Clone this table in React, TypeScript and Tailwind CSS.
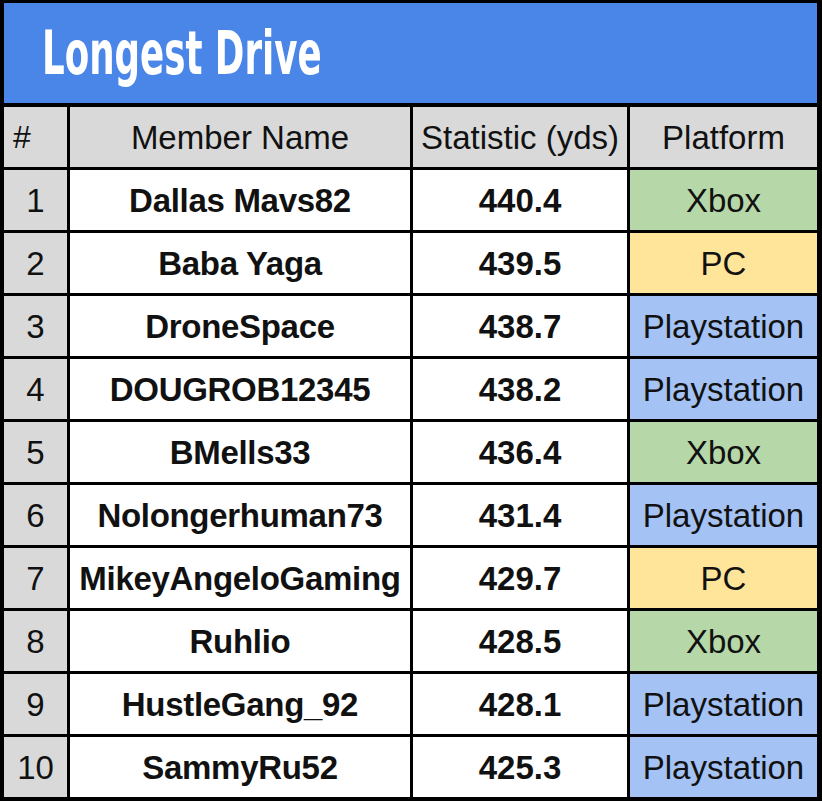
import React from 'react';

type Row = { rank: number; name: string; stat: string; platform: 'Xbox' | 'PC' | 'Playstation' };

const rows: Row[] = [
  { rank: 1, name: 'Dallas Mavs82', stat: '440.4', platform: 'Xbox' },
  { rank: 2, name: 'Baba Yaga', stat: '439.5', platform: 'PC' },
  { rank: 3, name: 'DroneSpace', stat: '438.7', platform: 'Playstation' },
  { rank: 4, name: 'DOUGROB12345', stat: '438.2', platform: 'Playstation' },
  { rank: 5, name: 'BMells33', stat: '436.4', platform: 'Xbox' },
  { rank: 6, name: 'Nolongerhuman73', stat: '431.4', platform: 'Playstation' },
  { rank: 7, name: 'MikeyAngeloGaming', stat: '429.7', platform: 'PC' },
  { rank: 8, name: 'Ruhlio', stat: '428.5', platform: 'Xbox' },
  { rank: 9, name: 'HustleGang_92', stat: '428.1', platform: 'Playstation' },
  { rank: 10, name: 'SammyRu52', stat: '425.3', platform: 'Playstation' },
];

const platformBg: Record<Row['platform'], string> = {
  Xbox: 'bg-[#b6d7a8]',
  PC: 'bg-[#ffe599]',
  Playstation: 'bg-[#a4c2f4]',
};

const cell = 'h-[60px] flex items-center justify-center text-[33px] leading-none text-[#111]';

export default function App() {
  return (
    <div className="w-[822px] h-[803px] bg-white font-['Liberation_Sans',Arial,sans-serif]">
      <div className="bg-black pt-[3px] pl-[4px] pr-[5px] pb-[4px]">
        {/* Title bar */}
        <div className="h-[100px] bg-[#4a86e8] flex items-center pl-[38px] overflow-hidden">
          <span className="origin-left scale-x-[0.66] text-white text-[60px] leading-none font-bold font-['DejaVu_Sans_Condensed','DejaVu_Sans',sans-serif] whitespace-nowrap">
            Longest Drive
          </span>
        </div>

        {/* Table */}
        <div className="mt-[4px] grid grid-cols-[63px_340px_214px_187px] gap-[3px]">
          <div className="h-[60px] flex items-center pl-[9px] bg-[#d9d9d9] text-[32px] leading-none text-[#111]">#</div>
          <div className={`${cell} bg-[#d9d9d9] text-[32px]`}>Member Name</div>
          <div className={`${cell} bg-[#d9d9d9]`}>Statistic (yds)</div>
          <div className={`${cell} bg-[#d9d9d9]`}>Platform</div>

          {rows.map((r) => (
            <React.Fragment key={r.rank}>
              <div className={`${cell} bg-[#d9d9d9]`}>{r.rank}</div>
              <div className={`${cell} bg-white font-bold tracking-[-0.3px]`}>{r.name}</div>
              <div className={`${cell} bg-white font-bold`}>{r.stat}</div>
              <div className={`${cell} ${platformBg[r.platform]}`}>{r.platform}</div>
            </React.Fragment>
          ))}
        </div>
      </div>
    </div>
  );
}
